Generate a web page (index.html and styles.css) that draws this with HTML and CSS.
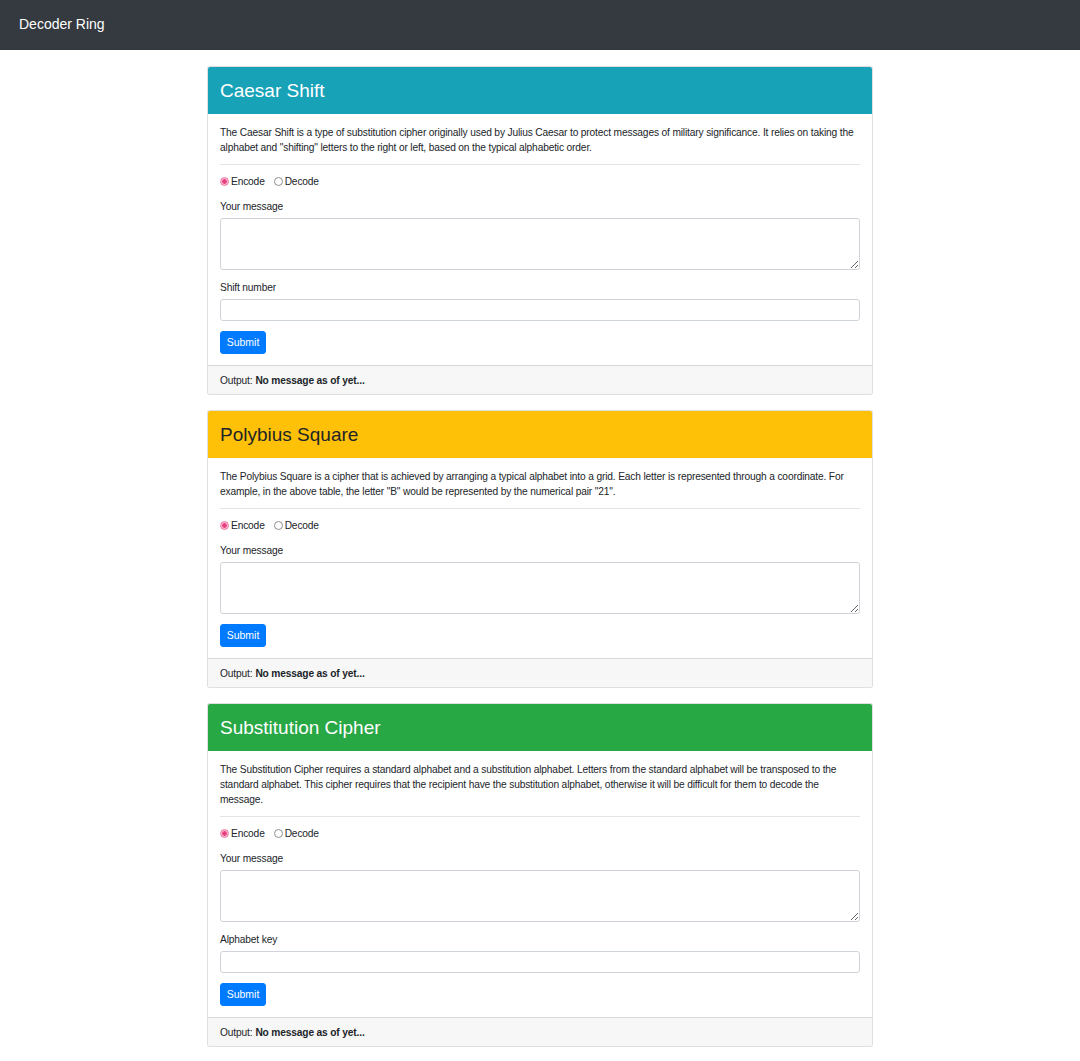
FILE: index.html
```html
<!DOCTYPE html>
<html lang="en">
<head>
<meta charset="utf-8">
<title>Decoder Ring</title>
<link rel="stylesheet" href="styles.css">
</head>
<body>
<nav class="navbar"><span class="brand">Decoder Ring</span></nav>
<main class="container">
  <section class="card">
    <div class="card-header info"><h3>Caesar Shift</h3></div>
    <div class="card-body">
      <p class="desc">The Caesar Shift is a type of substitution cipher originally used by Julius Caesar to protect messages of military significance. It relies on taking the alphabet and "shifting" letters to the right or left, based on the typical alphabetic order.</p>
      <hr class="divider">
      <form class="form">
        <div class="radios">
          <label class="radio"><input type="radio" name="m1" checked><span>Encode</span></label>
          <label class="radio"><input type="radio" name="m1"><span>Decode</span></label>
        </div>
        <div class="group">
          <label class="label">Your message</label>
          <textarea class="textarea"></textarea>
        </div>
        <div class="group">
          <label class="label">Shift number</label>
          <input class="input" type="text">
        </div>
        <button type="button" class="btn">Submit</button>
      </form>
    </div>
    <div class="card-footer">Output: <strong>No message as of yet...</strong></div>
  </section>

  <section class="card">
    <div class="card-header warning"><h3>Polybius Square</h3></div>
    <div class="card-body">
      <p class="desc">The Polybius Square is a cipher that is achieved by arranging a typical alphabet into a grid. Each letter is represented through a coordinate. For example, in the above table, the letter "B" would be represented by the numerical pair "21".</p>
      <hr class="divider">
      <form class="form">
        <div class="radios">
          <label class="radio"><input type="radio" name="m2" checked><span>Encode</span></label>
          <label class="radio"><input type="radio" name="m2"><span>Decode</span></label>
        </div>
        <div class="group">
          <label class="label">Your message</label>
          <textarea class="textarea"></textarea>
        </div>
        <button type="button" class="btn">Submit</button>
      </form>
    </div>
    <div class="card-footer">Output: <strong>No message as of yet...</strong></div>
  </section>

  <section class="card">
    <div class="card-header success"><h3>Substitution Cipher</h3></div>
    <div class="card-body">
      <p class="desc">The Substitution Cipher requires a standard alphabet and a substitution alphabet. Letters from the standard alphabet will be transposed to the standard alphabet. This cipher requires that the recipient have the substitution alphabet, otherwise it will be difficult for them to decode the message.</p>
      <hr class="divider">
      <form class="form">
        <div class="radios">
          <label class="radio"><input type="radio" name="m3" checked><span>Encode</span></label>
          <label class="radio"><input type="radio" name="m3"><span>Decode</span></label>
        </div>
        <div class="group">
          <label class="label">Your message</label>
          <textarea class="textarea"></textarea>
        </div>
        <div class="group">
          <label class="label">Alphabet key</label>
          <input class="input" type="text">
        </div>
        <button type="button" class="btn">Submit</button>
      </form>
    </div>
    <div class="card-footer">Output: <strong>No message as of yet...</strong></div>
  </section>
</main>
</body>
</html>
```

FILE: styles.css
```css
* { box-sizing: border-box; }
html, body { margin: 0; padding: 0; }
body {
  font-family: "Liberation Sans", Arial, sans-serif;
  font-size: 10.2px;
  letter-spacing: -0.15px;
  line-height: 15px;
  color: #212529;
  background: #fff;
}
.navbar {
  height: 50px;
  background: #343a40;
  display: flex;
  align-items: center;
  padding: 0 19px 2px;
}
.brand {
  color: #fff;
  font-size: 14px;
  line-height: 18px;
  letter-spacing: 0;
}
.container {
  width: 666px;
  margin: 16px auto 0;
  display: flex;
  flex-direction: column;
  gap: 15px;
}
.card {
  border: 1px solid rgba(0,0,0,0.125);
  border-radius: 3px;
  overflow: hidden;
  background: #fff;
}
.card-header {
  height: 47px;
  display: flex;
  align-items: center;
  padding: 0 12px;
}
.card-header h3 {
  margin: 0;
  font-size: 19px;
  font-weight: 500;
  line-height: 22px;
  letter-spacing: 0;
}
.info { background: #17a2b8; color: #fff; }
.warning { background: #ffc107; color: #212529; }
.success { background: #28a745; color: #fff; }
.card-body {
  padding: 11px 12px 11px;
}
.desc { margin: 0; }
.divider {
  border: 0;
  border-top: 1px solid rgba(0,0,0,0.1);
  margin: 9px 0 9px;
}
.form {
  display: flex;
  flex-direction: column;
  gap: 10px;
  align-items: flex-start;
}
.radios {
  display: flex;
  gap: 9px;
}
.radio {
  display: flex;
  align-items: center;
  gap: 2px;
}
.radio input {
  appearance: none;
  -webkit-appearance: none;
  margin: 0;
  width: 9px;
  height: 9px;
  border: 1px solid #8e8e8e;
  border-radius: 50%;
  background: #fff;
}
.radio input:checked {
  border-color: #ee7aa6;
  background: radial-gradient(circle, #e8407f 0 2px, #f7b6ce 2.5px);
}
.group {
  display: flex;
  flex-direction: column;
  gap: 4px;
  width: 100%;
}
.textarea {
  width: 100%;
  height: 52px;
  border: 1px solid #ced4da;
  border-radius: 3px;
  resize: vertical;
  font: inherit;
  display: block;
}
.input {
  width: 100%;
  height: 22px;
  border: 1px solid #ced4da;
  border-radius: 3px;
  font: inherit;
  display: block;
}
.btn {
  background: #007bff;
  color: #fff;
  border: 1px solid #007bff;
  border-radius: 3px;
  height: 23px;
  width: 46px;
  padding: 0;
  font: inherit;
  font-size: 10.5px;
  letter-spacing: 0;
}
.card-footer {
  background: #f7f7f7;
  border-top: 1px solid rgba(0,0,0,0.125);
  height: 29px;
  display: flex;
  align-items: center;
  padding: 0 12px;
  gap: 3px;
}
.card-footer strong { font-weight: bold; }
```
